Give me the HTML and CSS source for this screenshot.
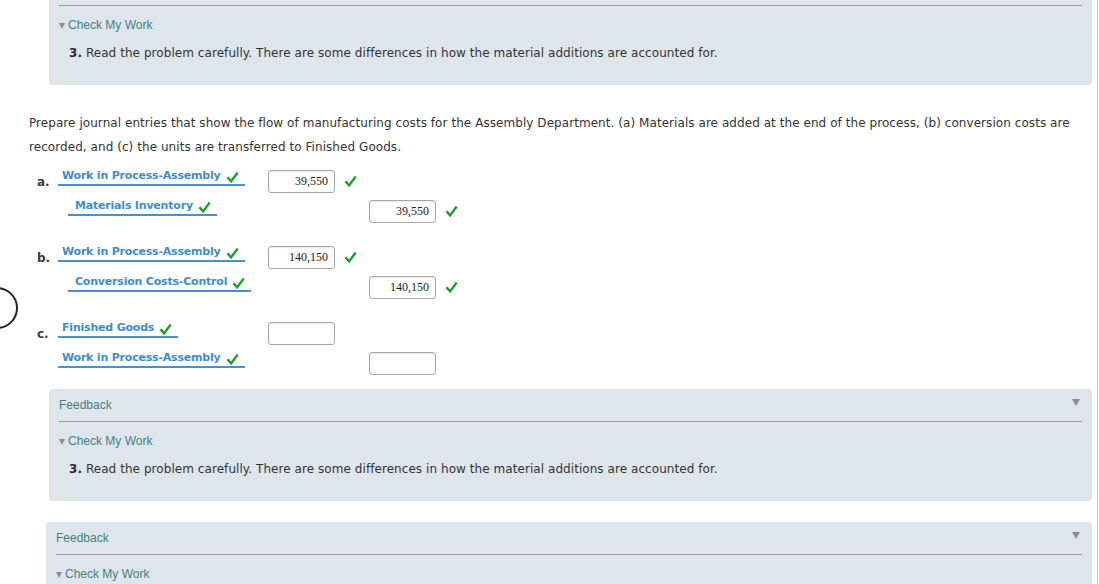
FILE: index.html
```html
<!DOCTYPE html>
<html lang="en">
<head>
<meta charset="utf-8">
<title>Journal entries</title>
<link rel="stylesheet" href="styles.css">
</head>
<body>
<div class="page">
  <section class="fb fb-top">
    <div class="fb-head"><span class="fb-title">Feedback</span><span class="fb-caret"></span></div>
    <div class="cmw"><span class="tri"></span>Check My Work</div>
    <p class="hint"><b>3.</b> Read the problem carefully. There are some differences in how the material additions are accounted for.</p>
  </section>

  <p class="prompt">Prepare journal entries that show the flow of manufacturing costs for the Assembly Department. (a) Materials are added at the end of the process, (b) conversion costs are recorded, and (c) the units are transferred to Finished Goods.</p>

  <div class="journal">
    <div class="entry">
      <div class="row">
        <span class="lbl">a.</span>
        <span class="acct">Work in Process-Assembly<svg class="ck" viewBox="0 0 14 14"><polygon points="0.5,7.5 2.8,5.8 5.4,9.2 11.6,0.8 13.6,2.4 5.6,13.2"/></svg></span>
        <span class="amt"><input class="num" type="text" value="39,550" readonly><svg class="ck" viewBox="0 0 14 14"><polygon points="0.5,7.5 2.8,5.8 5.4,9.2 11.6,0.8 13.6,2.4 5.6,13.2"/></svg></span>
        <span class="amt"></span>
      </div>
      <div class="row">
        <span class="lbl"></span>
        <span class="acct cr">Materials Inventory<svg class="ck" viewBox="0 0 14 14"><polygon points="0.5,7.5 2.8,5.8 5.4,9.2 11.6,0.8 13.6,2.4 5.6,13.2"/></svg></span>
        <span class="amt"></span>
        <span class="amt"><input class="num" type="text" value="39,550" readonly><svg class="ck" viewBox="0 0 14 14"><polygon points="0.5,7.5 2.8,5.8 5.4,9.2 11.6,0.8 13.6,2.4 5.6,13.2"/></svg></span>
      </div>
    </div>

    <div class="entry">
      <div class="row">
        <span class="lbl">b.</span>
        <span class="acct">Work in Process-Assembly<svg class="ck" viewBox="0 0 14 14"><polygon points="0.5,7.5 2.8,5.8 5.4,9.2 11.6,0.8 13.6,2.4 5.6,13.2"/></svg></span>
        <span class="amt"><input class="num" type="text" value="140,150" readonly><svg class="ck" viewBox="0 0 14 14"><polygon points="0.5,7.5 2.8,5.8 5.4,9.2 11.6,0.8 13.6,2.4 5.6,13.2"/></svg></span>
        <span class="amt"></span>
      </div>
      <div class="row">
        <span class="lbl"></span>
        <span class="acct cr">Conversion Costs-Control<svg class="ck" viewBox="0 0 14 14"><polygon points="0.5,7.5 2.8,5.8 5.4,9.2 11.6,0.8 13.6,2.4 5.6,13.2"/></svg></span>
        <span class="amt"></span>
        <span class="amt"><input class="num" type="text" value="140,150" readonly><svg class="ck" viewBox="0 0 14 14"><polygon points="0.5,7.5 2.8,5.8 5.4,9.2 11.6,0.8 13.6,2.4 5.6,13.2"/></svg></span>
      </div>
    </div>

    <div class="entry">
      <div class="row">
        <span class="lbl">c.</span>
        <span class="acct">Finished Goods<svg class="ck" viewBox="0 0 14 14"><polygon points="0.5,7.5 2.8,5.8 5.4,9.2 11.6,0.8 13.6,2.4 5.6,13.2"/></svg></span>
        <span class="amt"><input class="num" type="text" value="" readonly></span>
        <span class="amt"></span>
      </div>
      <div class="row">
        <span class="lbl"></span>
        <span class="acct">Work in Process-Assembly<svg class="ck" viewBox="0 0 14 14"><polygon points="0.5,7.5 2.8,5.8 5.4,9.2 11.6,0.8 13.6,2.4 5.6,13.2"/></svg></span>
        <span class="amt"></span>
        <span class="amt"><input class="num" type="text" value="" readonly></span>
      </div>
    </div>
  </div>

  <section class="fb fb-mid">
    <div class="fb-head"><span class="fb-title">Feedback</span><span class="fb-caret"></span></div>
    <div class="cmw"><span class="tri"></span>Check My Work</div>
    <p class="hint"><b>3.</b> Read the problem carefully. There are some differences in how the material additions are accounted for.</p>
  </section>

  <section class="fb fb-bot">
    <div class="fb-head"><span class="fb-title">Feedback</span><span class="fb-caret"></span></div>
    <div class="cmw"><span class="tri"></span>Check My Work</div>
    <p class="hint"><b>3.</b> Read the problem carefully. There are some differences in how the material additions are accounted for.</p>
  </section>

  <div class="cursor-ring"></div>
</div>
</body>
</html>
```

FILE: styles.css
```css
html, body {
  margin: 0;
  padding: 0;
  overflow: hidden;
  background: #ffffff;
}

body {
  font-family: "DejaVu Sans", Verdana, sans-serif;
  font-size: 12px;
  letter-spacing: 0.06px;
  color: #333333;
}

.page {
  position: relative;
  width: 1097px;
  min-height: 100vh;
  border-right: 1px solid #c6c6c6;
  overflow: hidden;
}

/* feedback boxes */
.fb {
  background: #dee6ec;
  border-radius: 4px;
  padding: 0 10px 24px 10px;
  width: 1043px;
  box-sizing: border-box;
}

.fb-top {
  margin: -27px 0 0 49px;
}

.fb-mid {
  margin: 11px 0 0 49px;
}

.fb-bot {
  margin: 21px 0 0 46px;
  width: 1046px;
}

.fb-head {
  height: 32px;
  border-bottom: 1px solid #9a9e9f;
  display: flex;
  align-items: center;
  justify-content: space-between;
  box-sizing: content-box;
  font-family: "Liberation Sans", Arial, sans-serif;
  font-size: 12px;
  letter-spacing: 0;
  color: #467f80;
}

.fb-title {
  line-height: 16px;
  margin-top: 0;
}

.fb-caret {
  width: 0;
  height: 0;
  border-left: 4px solid transparent;
  border-right: 4px solid transparent;
  border-top: 7px solid #8a8e90;
  margin-right: 2px;
  margin-top: -6px;
}

.cmw {
  margin-top: 11px;
  line-height: 16px;
  font-family: "Liberation Sans", Arial, sans-serif;
  font-size: 12px;
  letter-spacing: 0;
  color: #467f80;
  display: flex;
  align-items: center;
}

.tri {
  width: 0;
  height: 0;
  border-left: 3.5px solid transparent;
  border-right: 3.5px solid transparent;
  border-top: 6px solid #8a8e90;
  margin: 1px 3px 0 0;
}

.hint {
  margin: 12px 0 0 10px;
  line-height: 16px;
  color: #333333;
}

.hint b {
  color: #2a2a2a;
}

/* prompt */
.prompt {
  margin: 26px 20px 0 29px;
  line-height: 24px;
  color: #333333;
}

/* journal */
.journal {
  margin: 7px 0 0 29px;
  display: flex;
  flex-direction: column;
  gap: 16px;
}

.entry {
  display: flex;
  flex-direction: column;
}

.row {
  display: grid;
  grid-template-columns: 29px 210px 101px 120px;
  height: 30px;
  align-items: center;
}

.lbl {
  align-self: start;
  padding: 9px 0 0 8px;
  font-size: 12px;
  font-weight: bold;
  line-height: 14px;
  letter-spacing: 0;
  color: #3a3a3a;
}

.acct {
  align-self: start;
  justify-self: start;
  margin-top: 2px;
  padding: 0 6px 0 4px;
  border-bottom: 2px solid #4a90cf;
  line-height: 16px;
  font-weight: bold;
  font-size: 11px;
  letter-spacing: -0.2px;
  color: #3f8ccd;
  display: inline-flex;
  align-items: center;
  white-space: nowrap;
}

.acct.cr {
  margin-left: 10px;
  padding-left: 7px;
}

.acct .ck {
  margin-left: 5px;
  margin-top: 3px;
}

.amt {
  display: flex;
  align-items: center;
}

.num {
  width: 67px;
  height: 23px;
  box-sizing: border-box;
  border: 1px solid #a8a8a8;
  border-radius: 3px;
  padding: 0 6px 0 4px;
  margin: 0;
  text-align: right;
  font-family: "Liberation Serif", "Times New Roman", serif;
  font-size: 12px;
  color: #222222;
  background: #ffffff;
  box-shadow: inset 0 1px 1px rgba(0, 0, 0, 0.08);
  outline: none;
}

.amt .ck {
  margin-left: 9px;
}

.ck {
  width: 13px;
  height: 13px;
  flex: none;
  fill: #1c9e2e;
}

.cursor-ring {
  position: absolute;
  left: -24px;
  top: 287px;
  width: 42px;
  height: 42px;
  box-sizing: border-box;
  border: 2.5px solid #222222;
  border-radius: 50%;
}
```
